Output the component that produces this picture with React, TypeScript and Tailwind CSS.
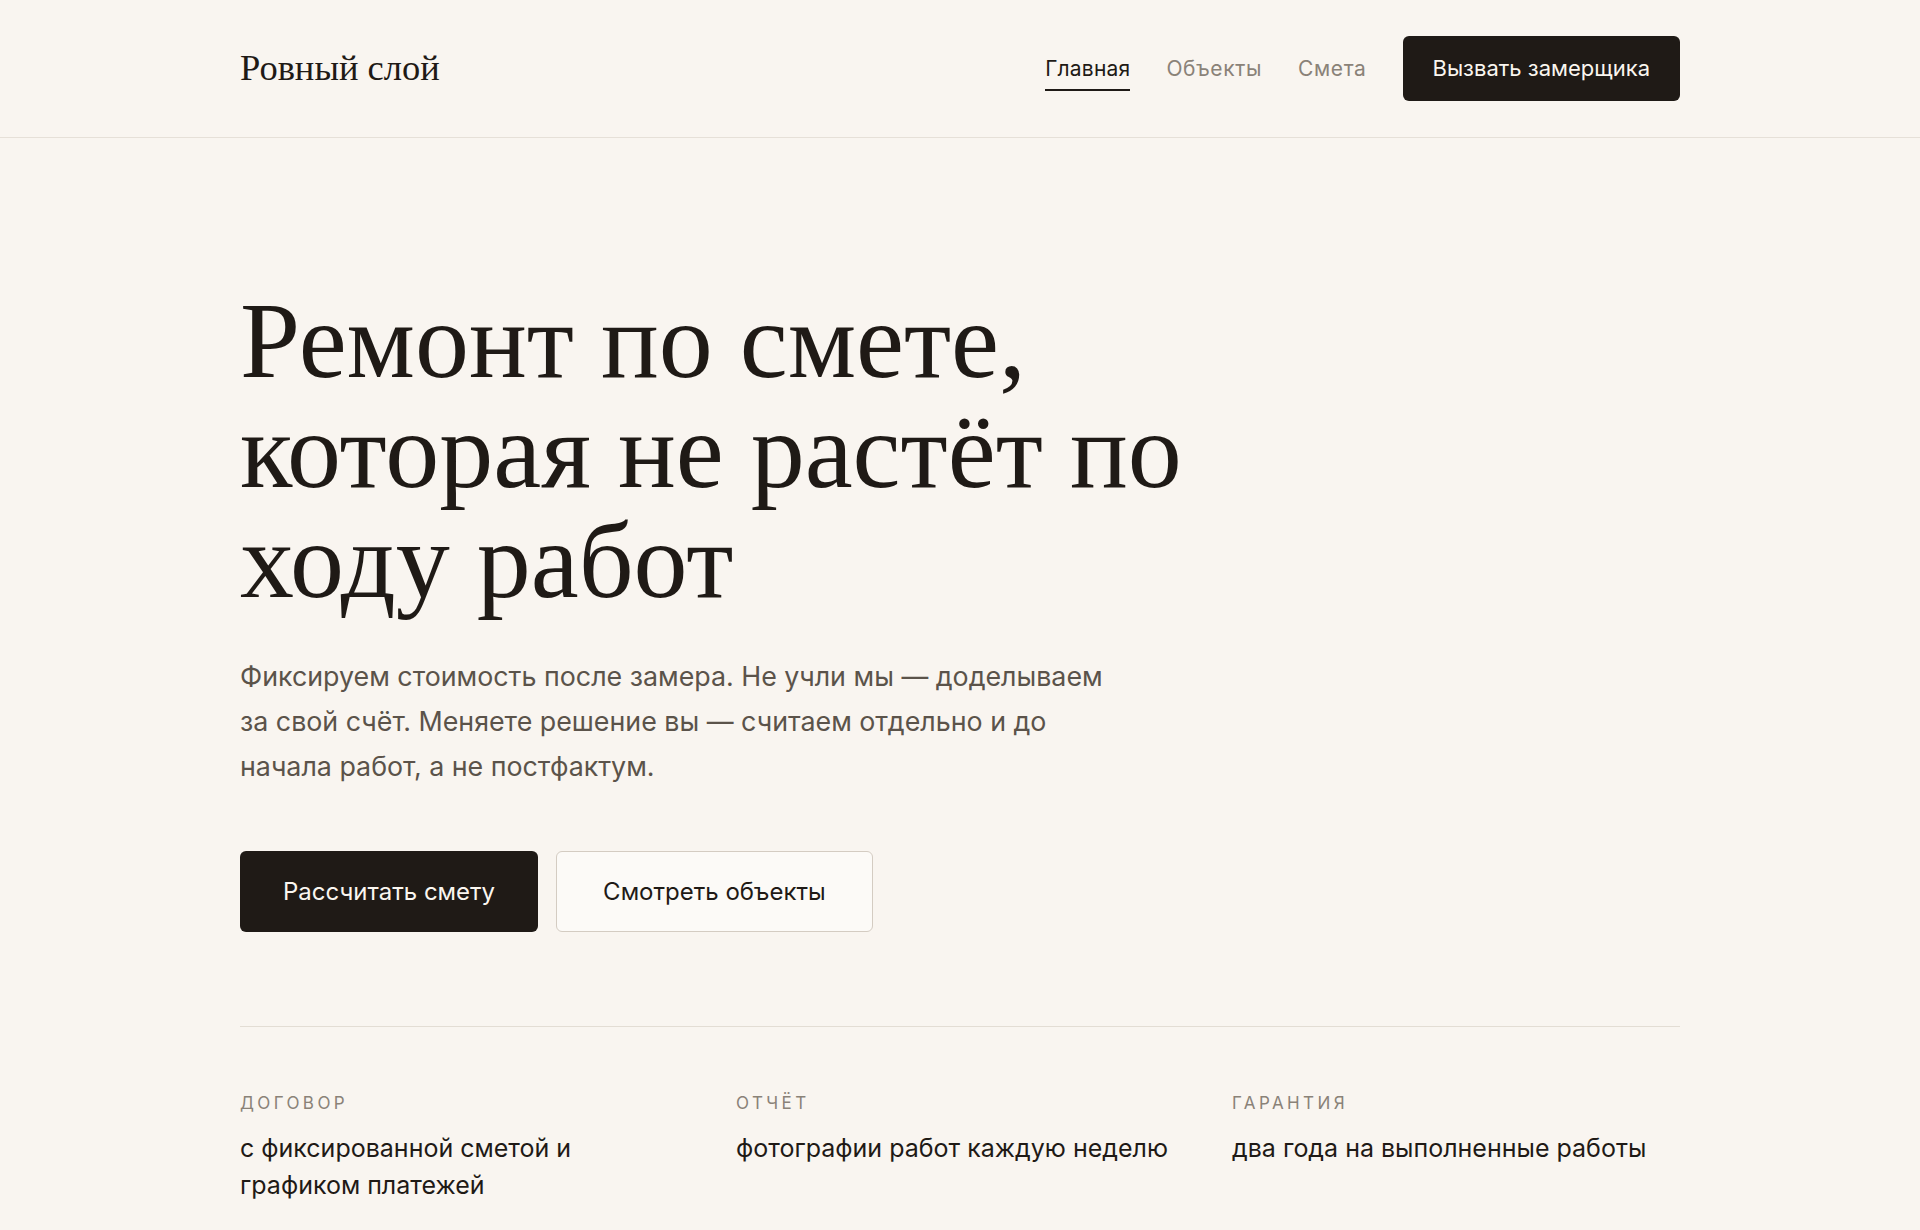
const nav = [
  { label: "Главная", active: true },
  { label: "Объекты", active: false },
  { label: "Смета", active: false },
];

const facts = [
  { title: "Договор", text: "с фиксированной сметой и графиком платежей" },
  { title: "Отчёт", text: "фотографии работ каждую неделю" },
  { title: "Гарантия", text: "два года на выполненные работы" },
];

const sans = "font-['Inter','Noto_Sans',sans-serif]";
const serif = "font-['Liberation_Serif','DejaVu_Serif',serif]";

export default function App() {
  return (
    <div className={`min-h-screen bg-[#f9f5f0] text-[#1f1a16] ${sans}`}>
      <header className="border-b border-[#e6e0d8]">
        <div className="mx-auto flex h-[137px] max-w-[1440px] items-center justify-between">
          <a href="#" className={`${serif} text-[36.5px] leading-none`}>
            Ровный слой
          </a>
          <nav className="flex items-center gap-9">
            {nav.map((item) => (
              <a
                key={item.label}
                href="#"
                className={
                  item.active
                    ? "border-b-2 border-[#1f1a16] pb-[6px] pt-2 text-[21px] leading-7 tracking-[0.01em] text-[#1f1a16]"
                    : "pb-2 pt-2 text-[21px] leading-7 tracking-[0.03em] text-[#8a8278]"
                }
              >
                {item.label}
              </a>
            ))}
            <button className="h-[65px] rounded-md bg-[#1f1a16] px-[30px] text-[22px] text-[#faf6f0]">
              Вызвать замерщика
            </button>
          </nav>
        </div>
      </header>

      <main className="mx-auto max-w-[1440px]">
        <section className="pt-[148px]">
          <h1 className={`${serif} max-w-[1000px] text-[108px] leading-[110px]`}>
            Ремонт по смете, которая не растёт по ходу работ
          </h1>
          <p className="mt-[38px] max-w-[870px] text-[26.8px] leading-[45px] text-[#5b534a]">
            Фиксируем стоимость после замера. Не учли мы — доделываем за свой
            счёт. Меняете решение вы — считаем отдельно и до начала работ, а не
            постфактум.
          </p>
          <div className="mt-[62px] flex gap-[18px]">
            <button className="h-[81px] rounded-md bg-[#1f1a16] px-[43px] text-[24px] text-[#faf6f0]">
              Рассчитать смету
            </button>
            <button className="h-[81px] rounded-md border border-[#d4ccc2] bg-[#fcfaf7] px-[46px] text-[24px] text-[#1f1a16]">
              Смотреть объекты
            </button>
          </div>
        </section>

        <section className="mt-[94px] grid grid-cols-3 gap-12 border-t border-[#e3ddd4] pt-[64px]">
          {facts.map((f) => (
            <div key={f.title}>
              <div className="text-[17px] uppercase leading-6 tracking-[0.2em] text-[#8a8278]">
                {f.title}
              </div>
              <p className="mt-[15px] text-[25px] leading-[37px]">{f.text}</p>
            </div>
          ))}
        </section>
      </main>
    </div>
  );
}
